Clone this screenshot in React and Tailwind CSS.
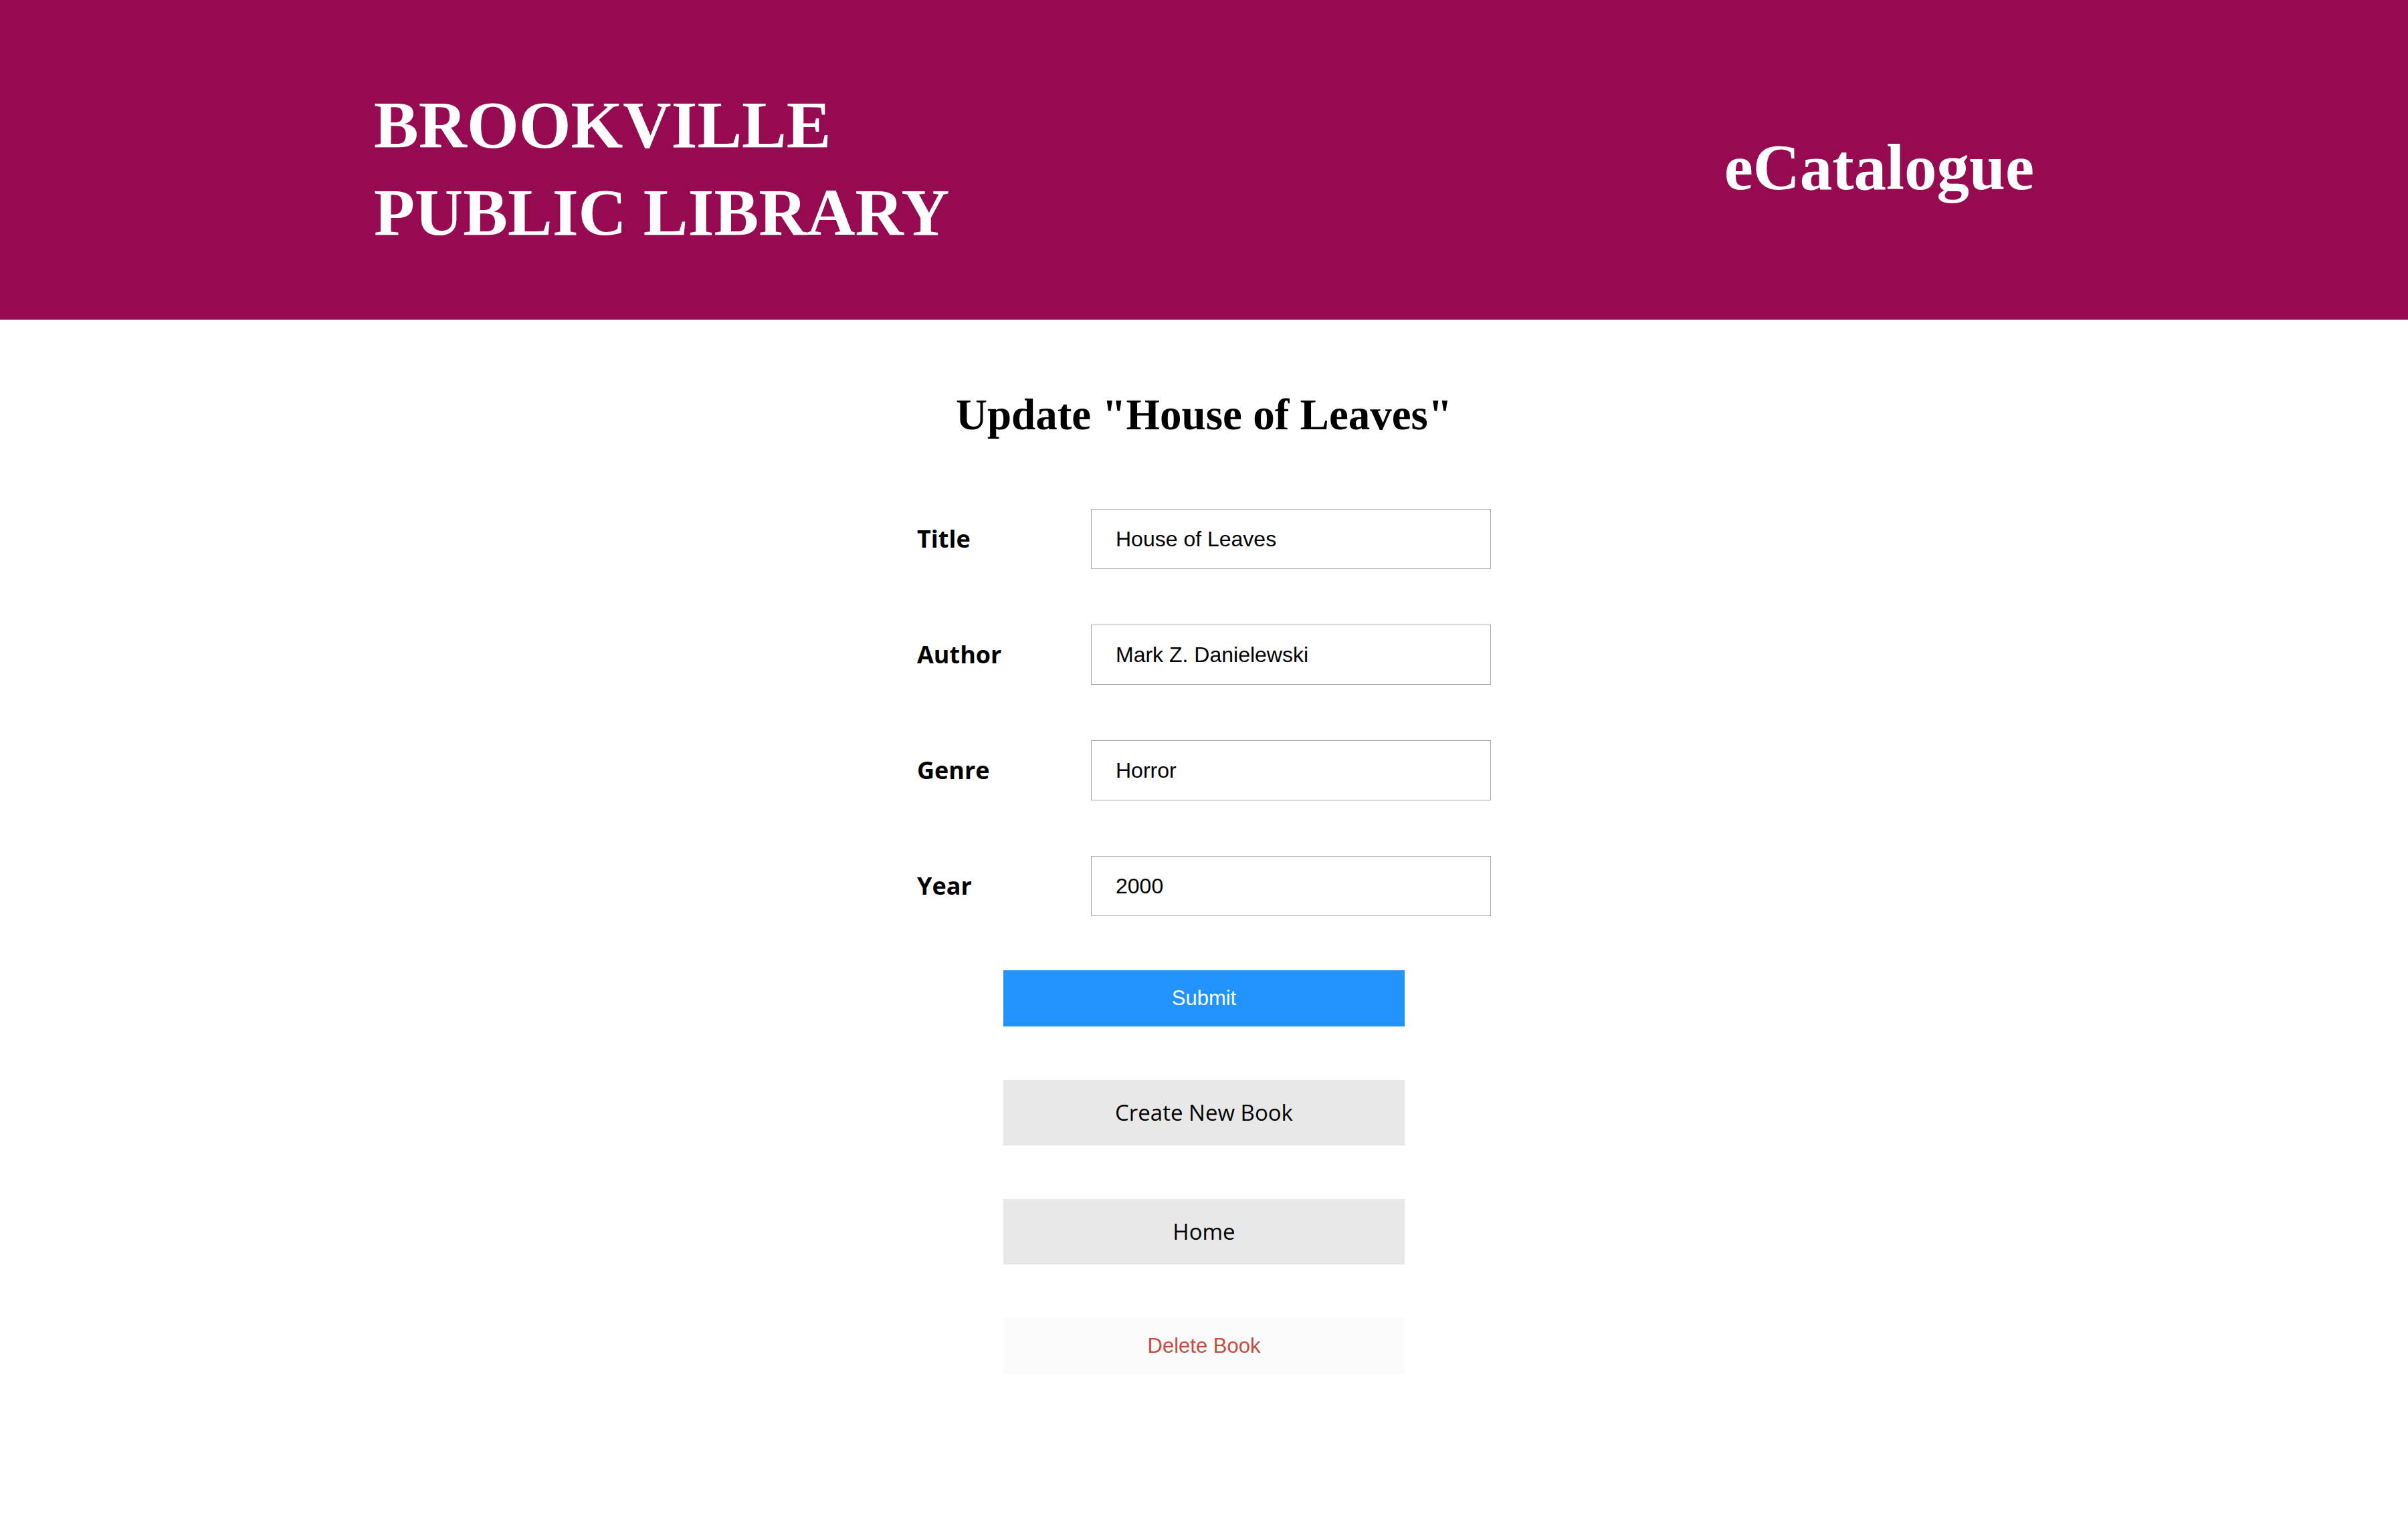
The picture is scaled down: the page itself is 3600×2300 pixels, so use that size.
export default function App() {
  const rows = [
    ["Title", "House of Leaves"],
    ["Author", "Mark Z. Danielewski"],
    ["Genre", "Horror"],
    ["Year", "2000"],
  ];
  return (
    <div className="min-h-[2300px] w-[3600px] bg-white">
      <header className="h-[478px] bg-[#950a51] px-[559px] flex justify-between items-start text-white">
        <div className="mt-[121px] font-bold text-[100px] leading-[131px] font-['Liberation_Serif',serif]">
          <div>BROOKVILLE</div>
          <div>PUBLIC LIBRARY</div>
        </div>
        <div className="mt-[202px] font-bold text-[97px] leading-[97px] font-['Liberation_Serif',serif]">
          eCatalogue
        </div>
      </header>
      <main className="flex flex-col items-center">
        <h1 className="mt-[110px] font-bold text-[65px] leading-[65px] text-black font-['Liberation_Serif',serif]">
          Update "House of Leaves"
        </h1>
        <form className="mt-[108px] grid grid-cols-[260px_598px] gap-y-[83px]" onSubmit={(e) => e.preventDefault()}>
          {rows.map(([label, value]) => (
            <div key={label} className="contents">
              <label className="self-center text-[36px] font-bold text-black font-['Open_Sans',sans-serif] leading-none">
                {label}
              </label>
              <input
                defaultValue={value}
                className="h-[90px] border border-[#a6a6a6] pl-[36px] text-[32px] text-black outline-none font-['Liberation_Sans',Arial,sans-serif]"
              />
            </div>
          ))}
        </form>
        <div className="mt-[81px] flex flex-col gap-[80px] w-[600px]">
          <button className="h-[84px] bg-[#2293fb] text-white text-[31px] font-['Liberation_Sans',Arial,sans-serif]">
            Submit
          </button>
          <button className="h-[98px] bg-[#e8e8e8] text-black text-[33px] font-['Open_Sans',sans-serif]">
            Create New Book
          </button>
          <button className="h-[98px] bg-[#e8e8e8] text-black text-[33px] font-['Open_Sans',sans-serif]">
            Home
          </button>
          <button className="h-[84px] bg-[#fbfbfb] text-[#c84b40] text-[31px] font-['Liberation_Sans',Arial,sans-serif]">
            Delete Book
          </button>
        </div>
      </main>
    </div>
  );
}
